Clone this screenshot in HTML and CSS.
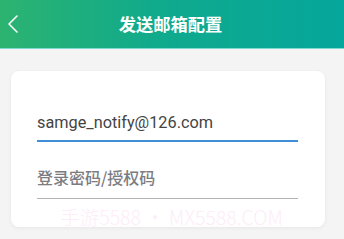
FILE: index.html
```html
<!DOCTYPE html>
<html>
<head>
<meta charset="utf-8">
<link rel="stylesheet" href="styles.css">
</head>
<body>
<header class="bar">
  <svg class="back" width="12" height="20" viewBox="0 0 12 20"><path d="M10 2 L2 10 L10 18" fill="none" stroke="#fff" stroke-width="1.6" stroke-linecap="round" stroke-linejoin="round"/></svg>
  <div class="title">发送邮箱配置</div>
</header>
<main class="page">
  <section class="card">
    <div class="field active"><span class="value">samge_notify@126.com</span></div>
    <div class="field"><span class="placeholder">登录密码/授权码</span></div>
    <div class="mark">手游5588 • MX5588.COM</div>
  </section>
</main>
</body>
</html>
```
FILE: styles.css
```css
* { box-sizing: border-box; }
html, body { margin: 0; padding: 0; }
body {
  width: 344px; height: 239px; overflow: hidden;
  background: #f4f4f4;
  font-family: Roboto, "Noto Sans CJK SC", sans-serif;
}
.bar {
  position: relative;
  height: 49px;
  background: linear-gradient(90deg, #2cb370 0%, #10aa8c 45%, #05a69c 100%);
  border-bottom: 1px solid #7fd9d3;
  display: flex; align-items: center; justify-content: center;
}
.back { position: absolute; left: 7px; top: 14px; }
.title {
  color: #fff; font-size: 17.3px; font-weight: bold;
  font-family: "Noto Sans CJK SC", sans-serif;
  margin-top: -1px;
  margin-left: -3px;
}
.page { padding: 22px 19px 0 11px; }
.card {
  background: #fff;
  border-radius: 8px;
  box-shadow: 0 1px 4px rgba(0,0,0,0.06);
  height: 156px;
  padding: 33px 27px 0 26px;
}
.field {
  height: 38px;
  border-bottom: 1.5px solid #b3b3b3;
  display: flex; align-items: center;
  font-size: 16.3px;
}
.field + .field { margin-top: 19px; }
.field.active { border-bottom: 2px solid #3f8fd8; }
.value { color: #444; }
.placeholder {
  color: #7c7c82;
  font-family: "Noto Sans CJK SC", sans-serif;
  font-size: 16px; font-weight: 500;
  padding-bottom: 6px;
}
.mark {
  margin-top: 6px;
  text-align: center;
  color: #fdedf8;
  font-size: 19.5px;
  font-weight: 300;
  font-family: "Noto Sans CJK SC", sans-serif;
  margin-left: 8px;
  line-height: 24px;
}
```
